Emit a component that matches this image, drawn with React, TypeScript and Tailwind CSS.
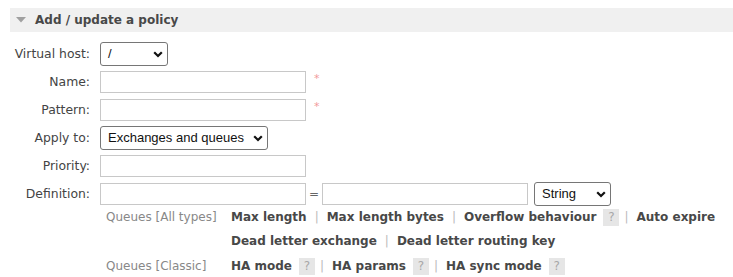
import React from "react";

const Chevron = () => (
  <svg width="10" height="7" viewBox="0 0 10 7" className="shrink-0">
    <polyline points="1.2,1.2 5,5 8.8,1.2" fill="none" stroke="#111" strokeWidth="2.2" />
  </svg>
);

const Select = ({ value, w }: { value: string; w: string }) => (
  <div
    className={`${w} h-[24px] border border-[#767676] rounded-[3px] bg-white flex items-center justify-between pl-[7px] pr-[4px] text-[13px] text-[#111]`}
    style={{ fontFamily: '"Liberation Sans", Arial, sans-serif' }}
  >
    <span>{value}</span>
    <Chevron />
  </div>
);

const Input = () => <div className="w-[206px] h-[22px] border border-[#c8c8c8] bg-white" />;

const Req = () => <span className="ml-[8px] text-[11px] text-[#f29a9a] relative -top-[3px]">*</span>;

const Sep = () => <span className="mx-[8px] font-normal text-[#bbb]">|</span>;

const Help = () => (
  <span className="inline-flex items-center justify-center w-[16px] h-[17px] bg-[#e6e6e6] text-[#a8a8a8] font-normal ml-[7px] mr-[-3px] leading-none">
    ?
  </span>
);

const L = ({ t }: { t: string }) => <span className="font-bold text-[#484848] whitespace-nowrap">{t}</span>;

export default function App() {
  const font = { fontFamily: '"DejaVu Sans", Verdana, sans-serif' };
  const rows: [string, React.ReactNode][] = [
    ["Virtual host:", <Select value="/" w="w-[68px]" />],
    [
      "Name:",
      <>
        <Input />
        <Req />
      </>,
    ],
    [
      "Pattern:",
      <>
        <Input />
        <Req />
      </>,
    ],
    ["Apply to:", <Select value="Exchanges and queues" w="w-[168px]" />],
    ["Priority:", <Input />],
    [
      "Definition:",
      <>
        <Input />
        <span className="mx-[3px] text-[#666]">=</span>
        <Input />
        <div className="ml-[6px]">
          <Select value="String" w="w-[77px]" />
        </div>
      </>,
    ],
  ];
  return (
    <div className="w-[733px] h-[277px] bg-white text-[12px] text-[#444] overflow-hidden" style={font}>
      <div className="mt-[8px] ml-[10px] h-[24px] bg-[#f0f0f0] flex items-center">
        <svg width="10" height="6" viewBox="0 0 10 6" className="ml-[6px]">
          <polygon points="0,0 10,0 5,5.5" fill="#a0a0a0" />
        </svg>
        <span className="ml-[9px] font-bold text-[#484848] text-[12px]">Add / update a policy</span>
      </div>
      <div className="mt-[8px] grid grid-cols-[90px_1fr] gap-x-[10px]">
        {rows.map(([label, ctrl], i) => (
          <React.Fragment key={i}>
            <div className="h-[28px] flex items-center justify-end text-[12.4px]">{label}</div>
            <div className="h-[28px] flex items-center">{ctrl}</div>
          </React.Fragment>
        ))}
        <div />
        <div className="-mt-[3px] pl-[6px] grid grid-cols-[125px_1fr] leading-[24px]">
          <div className="text-[#888]">Queues [All types]</div>
          <div className="flex flex-wrap items-center">
            <L t="Max length" />
            <Sep />
            <L t="Max length bytes" />
            <Sep />
            <L t="Overflow behaviour" />
            <Help />
            <Sep />
            <L t="Auto expire" />
            <div className="basis-full h-0" />
            <L t="Dead letter exchange" />
            <Sep />
            <L t="Dead letter routing key" />
          </div>
          <div className="text-[#888] mt-[1px]">Queues [Classic]</div>
          <div className="flex items-center mt-[1px]">
            <L t="HA mode" />
            <Help />
            <Sep />
            <L t="HA params" />
            <Help />
            <Sep />
            <L t="HA sync mode" />
            <Help />
          </div>
        </div>
      </div>
    </div>
  );
}
